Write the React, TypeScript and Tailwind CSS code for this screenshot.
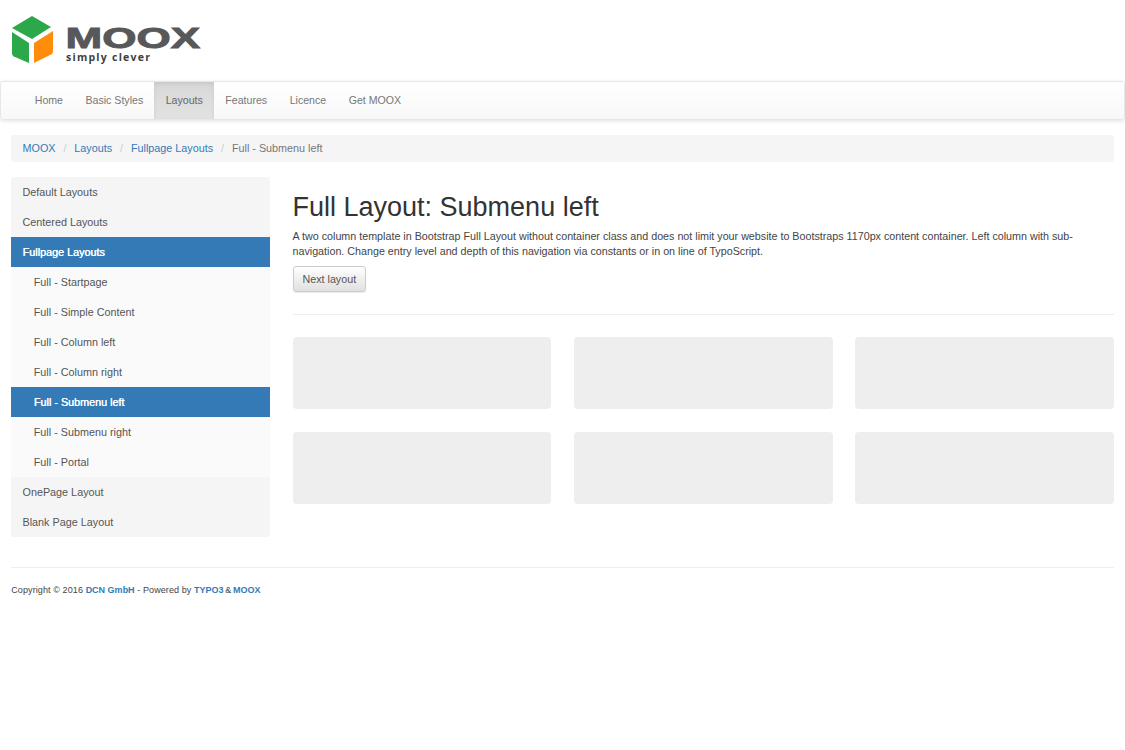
import React from 'react';

const NAV_ITEMS = ['Home', 'Basic Styles', 'Layouts', 'Features', 'Licence', 'Get MOOX'];

const SIDE_ITEMS = [
    { label: 'Default Layouts' },
    { label: 'Centered Layouts' },
    { label: 'Fullpage Layouts', active: true },
    { label: 'Full - Startpage', sub: true },
    { label: 'Full - Simple Content', sub: true },
    { label: 'Full - Column left', sub: true },
    { label: 'Full - Column right', sub: true },
    { label: 'Full - Submenu left', sub: true, active: true },
    { label: 'Full - Submenu right', sub: true },
    { label: 'Full - Portal', sub: true },
    { label: 'OnePage Layout' },
    { label: 'Blank Page Layout' },
];

const Logo = () => (
    <svg width="192" height="50" viewBox="0 0 192 50" className="block">
        <path d="M1 13 L21 1 L40 12 L21 24 Z" fill="#2aa84a" />
        <path d="M1 17 L18 28 L18 48 L4 42 Q1 41 1 38 Z" fill="#2aa84a" />
        <path d="M42 16 L23 28 L23 48 L39 40 Q42 39 42 36 Z" fill="#ff8c0a" />
        <text x="54.5" y="32.6" fontFamily="Liberation Sans, sans-serif" fontWeight="700" fontSize="29" fill="#58585a" stroke="#58585a" strokeWidth="0.9" textLength="134.5" lengthAdjust="spacingAndGlyphs">MOOX</text>
        <text x="55" y="46" fontFamily="Open Sans, sans-serif" fontWeight="700" fontSize="10.5" fill="#414042" textLength="84">simply clever</text>
    </svg>
);

const App = () => {
    return (
        <div className="min-h-[750px] bg-white text-[10.72px] leading-[15px] text-[#444] font-['Liberation_Sans',Arial,sans-serif]">
            {/* Logo */}
            <div className="h-[81px] pl-[11px] pt-[15px]">
                <Logo />
            </div>

            {/* Navbar */}
            <div className="h-[39px] flex pl-[22.5px] rounded-[3px] border border-[#e7e7e7] bg-gradient-to-b from-white to-[#f8f8f8] shadow-[0_1px_4px_rgba(0,0,0,0.12)] text-[10.6px]">
                {NAV_ITEMS.map(item => (
                    <a
                        key={item}
                        className={
                            item === 'Layouts'
                                ? 'px-[11.25px] leading-[37px] text-[#666] bg-gradient-to-b from-[#d8d8d8] to-[#e2e2e2] shadow-[inset_0_2px_4px_rgba(0,0,0,0.08)]'
                                : 'px-[11.25px] leading-[37px] text-[#777]'
                        }
                    >
                        {item}
                    </a>
                ))}
            </div>

            <div className="px-[11.25px]">
                {/* Breadcrumb */}
                <div className="mt-[15px] h-[27px] flex items-center px-[11.25px] rounded-[3px] bg-[#f5f5f5] text-[10.8px]">
                    <a className="text-[#337ab7]">MOOX</a>
                    <span className="px-[7.9px] text-[#ccc]">/</span>
                    <a className="text-[#337ab7]">Layouts</a>
                    <span className="px-[7.9px] text-[#ccc]">/</span>
                    <a className="text-[#337ab7]">Fullpage Layouts</a>
                    <span className="px-[7.9px] text-[#ccc]">/</span>
                    <span className="text-[#777]">Full - Submenu left</span>
                </div>

                <div className="mt-[15px] flex gap-[22.5px]">
                    {/* Sidebar */}
                    <div className="w-[258.75px] shrink-0 overflow-hidden rounded-[3px] bg-[#f5f5f5] text-[10.8px]">
                        {SIDE_ITEMS.map(item => (
                            <div
                                key={item.label}
                                className={[
                                    'h-[30px] leading-[30px]',
                                    item.sub ? 'pl-[22.5px]' : 'pl-[11.25px]',
                                    item.active
                                        ? 'bg-[#337ab7] text-white [text-shadow:0.4px_0_0_#fff]'
                                        : item.sub
                                          ? 'bg-[#fafafa] text-[#555]'
                                          : 'text-[#555]',
                                ].join(' ')}
                            >
                                {item.label}
                            </div>
                        ))}
                    </div>

                    {/* Main content */}
                    <div className="flex-1 min-w-0">
                        <h1 className="mt-[15px] text-[27px] leading-[30px] text-[#333]">Full Layout: Submenu left</h1>
                        <p className="mt-[6.5px] pr-[30px]">
                            A two column template in Bootstrap Full Layout without container class and does not limit your website to Bootstraps 1170px content container. Left column with sub-navigation. Change entry level and depth of this navigation via constants or in on line of TypoScript.
                        </p>
                        <button className="mt-[7.5px] block h-[26px] px-[9px] rounded-[3px] border border-[#ccc] bg-gradient-to-b from-white to-[#e0e0e0] text-[#555] shadow-[0_1px_1px_rgba(0,0,0,0.08)]">
                            Next layout
                        </button>
                        <div className="mt-[22px] border-t border-[#eee]" />
                        <div className="mt-[21.5px] grid grid-cols-3 gap-x-[22.5px] gap-y-[23px]">
                            {[0, 1, 2, 3, 4, 5].map(i => (
                                <div key={i} className="h-[72px] rounded-[4px] bg-[#eee]" />
                            ))}
                        </div>
                    </div>
                </div>

                {/* Footer */}
                <div className="mt-[30px] border-t border-[#eee] pt-[15px] text-[9px] leading-[15px] text-[#444] tracking-[0.1px]">
                    Copyright © 2016 <a className="font-bold tracking-normal text-[#337ab7]">DCN GmbH</a> - Powered by <a className="font-bold tracking-normal text-[#337ab7]">TYPO3</a> <span className="mx-[-1px]">&amp;</span> <a className="font-bold tracking-normal text-[#337ab7]">MOOX</a>
                </div>
            </div>
        </div>
    );
};

export default App;
